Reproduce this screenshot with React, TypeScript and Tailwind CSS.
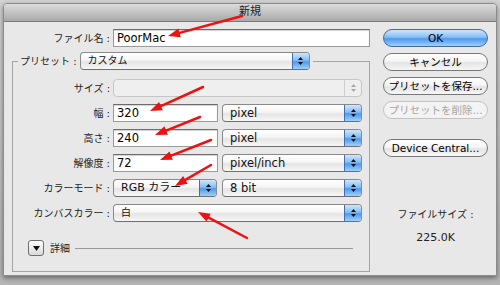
import React from "react";

const aqua = "bg-[linear-gradient(#ffffff_0%,#f5f5f5_45%,#e4e4e4_55%,#f7f7f7_100%)]";
const blue = "bg-[linear-gradient(#cfe6fc_0%,#85bdf4_45%,#4f98ec_55%,#9fd0fb_100%)]";

const arrows = [
  { x1: 242, y1: 16, x2: 168, y2: 36 },
  { x1: 203, y1: 87, x2: 150, y2: 111 },
  { x1: 200, y1: 117, x2: 155, y2: 135 },
  { x1: 211, y1: 140, x2: 160, y2: 160 },
  { x1: 211, y1: 165, x2: 175, y2: 186 },
  { x1: 247, y1: 238, x2: 198, y2: 212 },
];

const Stepper = ({ disabled }: { disabled?: boolean }) => {
  const fill = disabled ? "#a8a8a8" : "#111";
  return (
    <span
      className={`flex w-[17px] flex-col items-center justify-center gap-[2px] border-l ${
        disabled ? "border-[#cfcfcf]" : `border-[#3f6fb4] ${blue}`
      }`}
    >
      <svg width="5" height="3" viewBox="0 0 5 3">
        <path d="M2.5 0L5 3H0Z" fill={fill} />
      </svg>
      <svg width="5" height="3" viewBox="0 0 5 3">
        <path d="M0 0H5L2.5 3Z" fill={fill} />
      </svg>
    </span>
  );
};

const Popup = ({
  value,
  className,
  disabled,
}: {
  value?: string;
  className: string;
  disabled?: boolean;
}) => (
  <div
    className={`flex h-[18px] overflow-hidden rounded-[4px] border ${
      disabled
        ? "border-[#c6c6c6] bg-[#efefef]"
        : `border-[#8a8a8a] border-b-[#6f6f6f] ${aqua}`
    } ${className}`}
  >
    <span className="flex-1 pl-[7px] leading-[16px] text-[#111]">{value}</span>
    <Stepper disabled={disabled} />
  </div>
);

const Field = ({ value, className }: { value: string; className: string }) => (
  <div
    className={`h-[18px] border border-[#9a9a9a] border-t-[#6c6c6c] bg-white pl-[3px] text-[11.5px] leading-[16px] text-black shadow-[inset_0_1px_1px_rgba(0,0,0,0.18)] ${className}`}
  >
    {value}
  </div>
);

const Button = ({
  label,
  primary,
  disabled,
}: {
  label: string;
  primary?: boolean;
  disabled?: boolean;
}) => (
  <div
    className={`flex h-[18px] items-center justify-center rounded-full border text-[10.5px] leading-none ${
      primary
        ? `border-[#46689a] ${blue} text-black`
        : disabled
        ? "border-[#c2c2c2] bg-[#f3f3f3] text-[#a6a6a6]"
        : `border-[#777] ${aqua} text-black`
    }`}
  >
    {label}
  </div>
);

const Row = ({ label, children }: { label: string; children: React.ReactNode }) => (
  <div className="flex h-[18px] items-center">
    <span className="w-[97px] text-right text-[#222]">{label}</span>
    <div className="ml-[3px] flex items-center">{children}</div>
  </div>
);

export default function App() {
  return (
    <div className="relative h-[285px] w-[500px] overflow-hidden bg-[linear-gradient(#d2d2d2,#b4b4b4)] pl-[3px] pt-[3px] font-['DejaVu_Sans','Noto_Sans_CJK_JP',sans-serif] text-[10px]">
      <div className="flex h-[273px] w-[494px] flex-col overflow-hidden rounded-t-[4px] border border-[#8c8c8c] shadow-[0_2px_5px_rgba(0,0,0,0.45)]">
        <div className="h-[17px] bg-[linear-gradient(#dcdcdc,#a9a9a9)] text-center text-[11px] leading-[16px] text-[#222]">
          新規
        </div>
        <div className="flex flex-1 border-t border-[#7a7a7a] bg-[#e8e8e8]">
          {/* left column */}
          <div className="flex w-[368px] flex-col pt-[7px]">
            <div className="flex h-[18px] items-center">
              <span className="w-[106px] text-right text-[#222]">ファイル名 :</span>
              <Field value="PoorMac" className="ml-[3px] w-[257px]" />
            </div>

            <fieldset className="ml-[8px] mt-[5px] w-[358px] border border-[#a4a4a4] pb-[15px]">
              <legend className="ml-[5px] flex items-center pl-[2px] pr-[3px]">
                <span className="text-[#222]">プリセット :</span>
                <Popup value="カスタム" className="ml-[3px] w-[230px]" />
              </legend>

              <div className="mt-[9px] flex flex-col gap-[7px]">
                <Row label="サイズ :">
                  <Popup disabled className="w-[249px]" />
                </Row>
                <Row label="幅 :">
                  <Field value="320" className="w-[105px]" />
                  <Popup value="pixel" className="ml-[4px] w-[140px] text-[11.5px]" />
                </Row>
                <Row label="高さ :">
                  <Field value="240" className="w-[105px]" />
                  <Popup value="pixel" className="ml-[4px] w-[140px] text-[11.5px]" />
                </Row>
                <Row label="解像度 :">
                  <Field value="72" className="w-[105px]" />
                  <Popup value="pixel/inch" className="ml-[4px] w-[140px] text-[11.5px]" />
                </Row>
                <Row label="カラーモード :">
                  <Popup value="RGB カラー" className="w-[104px] text-[11px]" />
                  <Popup value="8 bit" className="ml-[5px] w-[140px] text-[11.5px]" />
                </Row>
                <Row label="カンバスカラー :">
                  <Popup value="白" className="w-[249px]" />
                </Row>
              </div>

              <div className="mt-[18px] flex items-center pl-[15px]">
                <span className="flex h-[16px] w-[16px] items-center justify-center rounded-[3px] border border-[#6f6f6f] bg-[linear-gradient(#ffffff,#d9d9d9)]">
                  <svg width="7" height="5" viewBox="0 0 7 5">
                    <path d="M0 0H7L3.5 5Z" fill="#111" />
                  </svg>
                </span>
                <span className="ml-[6px] text-[#222]">詳細</span>
                <span className="ml-[5px] mr-[16px] h-px flex-1 bg-[#9a9a9a]" />
              </div>
            </fieldset>
          </div>

          {/* right column */}
          <div className="ml-[11px] flex w-[105px] flex-col pt-[7px]">
            <div className="flex flex-col gap-[6px]">
              <Button label="OK" primary />
              <Button label="キャンセル" />
              <Button label="プリセットを保存..." />
              <Button label="プリセットを削除..." disabled />
            </div>
            <div className="mt-[20px]">
              <Button label="Device Central..." />
            </div>
            <div className="mt-[51px] text-center leading-[14px] text-[#222]">ファイルサイズ :</div>
            <div className="mt-[9px] text-center text-[11px] leading-[14px] text-[#222]">225.0K</div>
          </div>
        </div>
      </div>

      {/* red annotation arrows drawn over the dialog */}
      <svg className="pointer-events-none absolute left-0 top-0" width="500" height="285">
        {arrows.map((a, i) => {
          const dx = a.x2 - a.x1;
          const dy = a.y2 - a.y1;
          const len = Math.hypot(dx, dy);
          const ux = dx / len;
          const uy = dy / len;
          const bx = a.x2 - ux * 12;
          const by = a.y2 - uy * 12;
          const px = -uy * 4.5;
          const py = ux * 4.5;
          return (
            <g key={i}>
              <line x1={a.x1} y1={a.y1} x2={bx} y2={by} stroke="#f01010" strokeWidth="2.5" strokeLinecap="round" />
              <polygon
                points={`${a.x2},${a.y2} ${bx + px},${by + py} ${bx - px},${by - py}`}
                fill="#f01010"
              />
            </g>
          );
        })}
      </svg>
    </div>
  );
}
